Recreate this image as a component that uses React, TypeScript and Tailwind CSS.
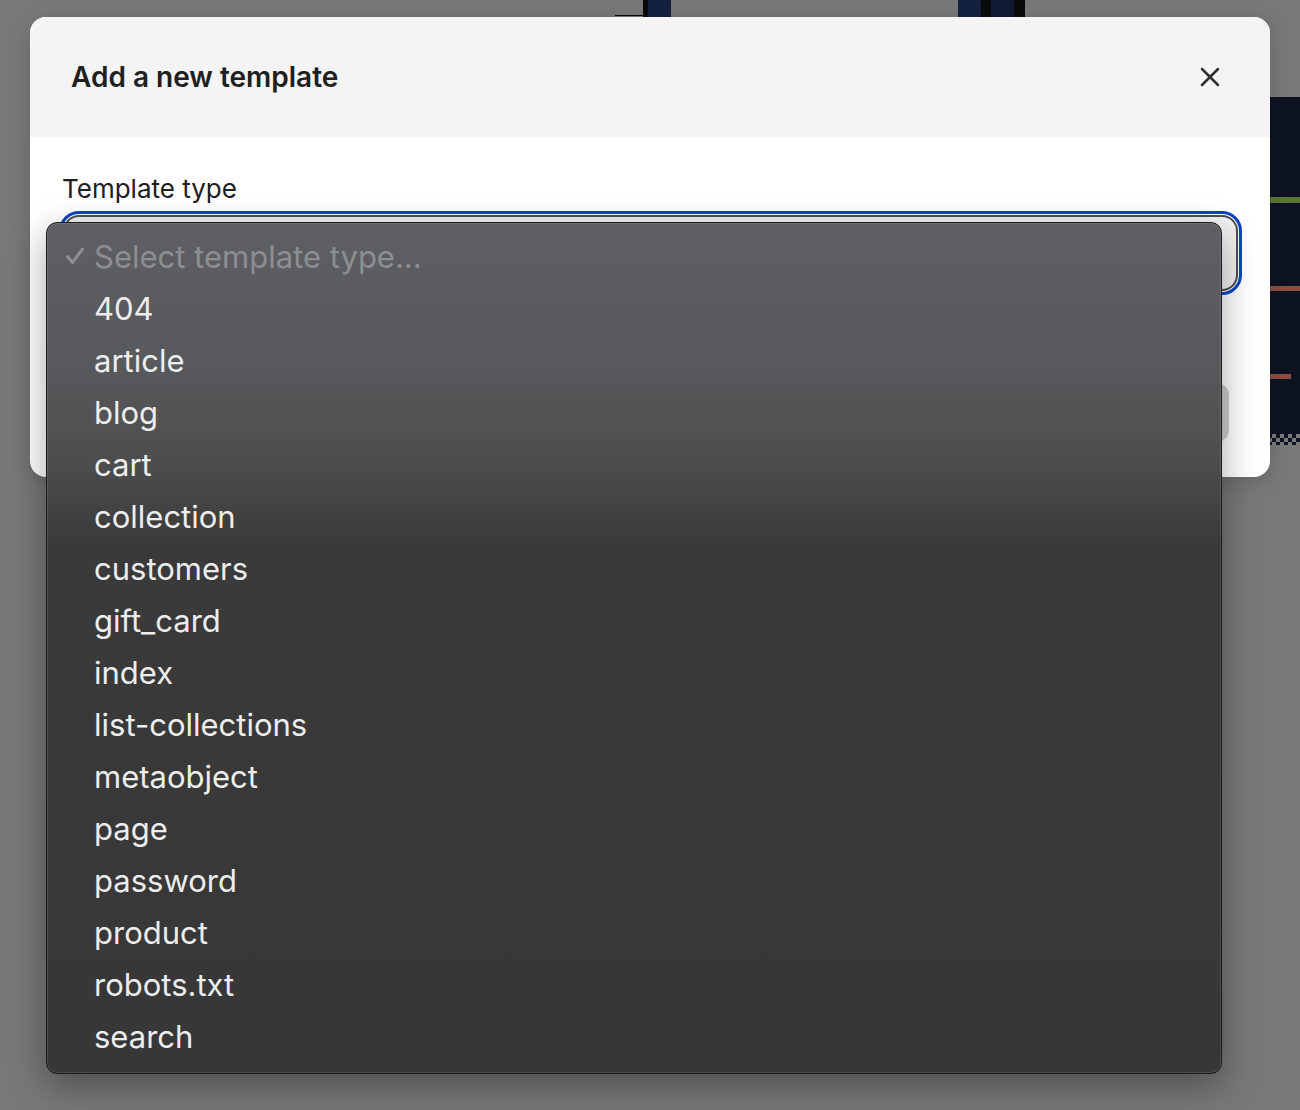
import { X } from 'lucide-react'

const options = [
  '404',
  'article',
  'blog',
  'cart',
  'collection',
  'customers',
  'gift_card',
  'index',
  'list-collections',
  'metaobject',
  'page',
  'password',
  'product',
  'robots.txt',
  'search',
]

function Backdrop() {
  return (
    <>
      {/* page content peeking out from behind the overlay */}
      <div className="absolute left-[615px] top-0 h-[16px] w-[28px] border-b border-[#0a0a0a]" />
      <div className="absolute left-[643px] top-0 h-[17px] w-[5px] bg-[#0a0b0c]" />
      <div className="absolute left-[648px] top-0 h-[17px] w-[23px] bg-[#13203f]" />
      <div className="absolute left-[958px] top-0 h-[17px] w-[23px] bg-[#13203f]" />
      <div className="absolute left-[981px] top-0 h-[17px] w-[10px] bg-[#0a0c0c]" />
      <div className="absolute left-[991px] top-0 h-[17px] w-[23px] bg-[#111a33]" />
      <div className="absolute left-[1014px] top-0 h-[17px] w-[11px] bg-[#0a0c0c]" />

      <div className="absolute left-[1200px] top-[97px] flex h-[348px] w-[100px] flex-col bg-[#0d1321]">
        <div className="mt-[100px] h-[6px] w-full bg-[#5b7634]" />
        <div className="mt-[83px] h-[5px] w-full bg-[#8a4e40]" />
        <div className="mt-[83px] h-[5px] w-[91px] bg-[#8a4e40]" />
        <div className="mt-auto h-[11px] w-full bg-[repeating-conic-gradient(#0d1321_0_25%,#7a7a7a_0_50%)] bg-[length:8px_8px]" />
      </div>
    </>
  )
}

function CheckMark() {
  return (
    <svg width="20" height="20" viewBox="0 0 20 20" fill="none">
      <path d="M2.5 10.5 L7.5 16.5 L17.5 3" stroke="#8e8e92" strokeWidth="3" strokeLinecap="round" strokeLinejoin="round" />
    </svg>
  )
}

function SelectMenu() {
  return (
    <div className="absolute left-[46px] top-[222px] z-20 w-[1176px] rounded-[11px] border border-[#1b1b1b] bg-[linear-gradient(to_bottom,#5e5f63_0px,#58595c_140px,#4d4d4e_240px,#3a3a3a_320px,#373737_100%)] pb-[11px] pt-[7px] shadow-[0_12px_36px_rgba(0,0,0,0.35),inset_0_0_0_1px_rgba(255,255,255,0.1)]">
      <div className="flex h-[52px] items-center">
        <div className="flex w-[47px] justify-end pr-[9px]">
          <CheckMark />
        </div>
        <span className="text-[31px] leading-none text-[#8d8e91]">Select template type...</span>
      </div>
      {options.map((o) => (
        <div key={o} className="flex h-[52px] items-center pl-[47px]">
          <span className="text-[31px] leading-none text-[#ededed]">{o}</span>
        </div>
      ))}
    </div>
  )
}

export default function App() {
  return (
    <div className="relative h-[1110px] w-[1300px] overflow-hidden bg-[#787878] pl-[30px] pt-[17px] font-['Inter','Liberation_Sans',sans-serif]">
      <Backdrop />

      <div className="relative z-10 w-[1240px] overflow-hidden rounded-[16px] bg-white shadow-[0_4px_20px_rgba(0,0,0,0.15)]">
        <div className="flex h-[120px] items-center justify-between bg-[#f4f4f4] pl-[41px] pr-[44px]">
          <h2 className="text-[28px] font-semibold text-[#202020]">Add a new template</h2>
          <X className="h-[32px] w-[32px] text-[#303030]" strokeWidth={1.9} />
        </div>

        <div className="flex flex-col pb-[35px] pl-[33px] pr-[32px] pt-[36px]">
          <label className="-ml-[1px] text-[26px] leading-[32px] text-[#202020]">Template type</label>
          <div className="mt-[10px] h-[76px] rounded-[16px] border-2 border-[#4d4d4d] bg-[#f2f2f2] outline-[3px] outline-offset-1 outline-[#0a45c9]" />
          <div className="mr-[9px] mt-[92px] flex justify-end">
            <div className="h-[59px] w-[150px] rounded-[12px] bg-[#cdcdcd]" />
          </div>
        </div>
      </div>

      <SelectMenu />
    </div>
  )
}
